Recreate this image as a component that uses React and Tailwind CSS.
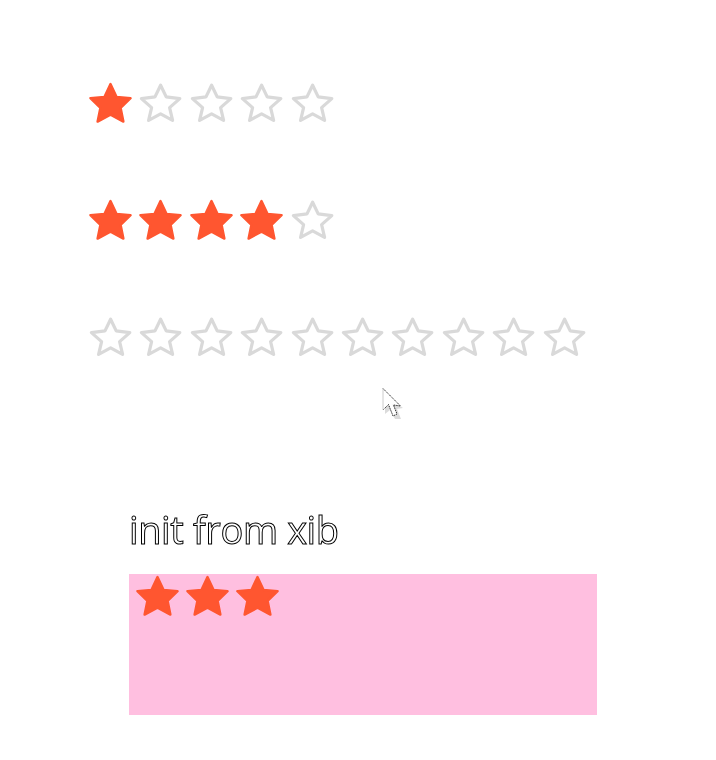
const PTS = "22.5,2 28.6,15 42.6,16.2 32.6,25.8 35.4,39.6 22.5,32.8 9.6,39.6 12.4,25.8 2.4,16.2 16.4,15";
const OUT = "22.6,3.2 28.2,14.9 41.8,16.6 31.6,25.6 34.6,38.4 22.6,31.8 10.6,38.4 13.6,25.6 3.4,16.6 17,14.9";

function Star({ filled }) {
  return (
    <svg width="44" height="42" viewBox="0 0 44 42" className="block shrink-0 overflow-visible">
      {filled ? (
        <polygon points={PTS} fill="#ff5630" stroke="#ff5630" strokeWidth="2.4" strokeLinejoin="round" />
      ) : (
        <polygon points={OUT} fill="white" stroke="#d9d9d9" strokeWidth="3.2" strokeLinejoin="round" />
      )}
    </svg>
  );
}

function Row({ total, filled, className = "" }) {
  return (
    <div className={`flex gap-[6.4px] ${className}`}>
      {Array.from({ length: total }, (_, i) => (
        <Star key={i} filled={i < filled} />
      ))}
    </div>
  );
}

function Cursor() {
  return (
    <svg width="26" height="38" viewBox="0 0 26 38" className="absolute left-[380px] top-[386px]">
      <path d="M5 8 L5 28 L10 24 L15 33 L21 33 L17 23 L23 22 Z" fill="#000" opacity="0.14" />
      <path d="M3 2.5 L3 24 L8.5 18.5 L13 30 L17 28 L12.5 18.5 L20.5 20 Z" fill="white" />
      <path d="M3 2.5 L3 24" stroke="#ccc" strokeWidth="1" fill="none" />
      <path d="M3 2.5 L20.5 20 L13.5 19 L17 28 L13 30 L8.5 18.5 L3.5 23.5" stroke="#333" strokeWidth="1" strokeDasharray="1.5 0.8" fill="none" />
    </svg>
  );
}

export default function App() {
  return (
    <div className="relative h-[760px] w-[716px] overflow-hidden bg-white pt-[82px] pl-[88px]">
      <Row total={5} filled={1} />
      <Row total={5} filled={4} className="mt-[75px]" />
      <Row total={10} filled={0} className="mt-[75px]" />
      <div className="pl-[41px] mt-[146px]">
        <div className="[will-change:transform] font-['Open_Sans',sans-serif] text-[38px] leading-[51px] font-normal tracking-[-0.4px] text-transparent [-webkit-text-stroke:1px_#000] whitespace-nowrap">
          init from xib
        </div>
        <div className="mt-[19px] h-[141px] w-[468px] bg-[#ffbfe0] pl-[6px] pt-[1px]">
          <Row total={3} filled={3} className="!gap-[6px]" />
        </div>
      </div>
      <Cursor />
    </div>
  );
}
